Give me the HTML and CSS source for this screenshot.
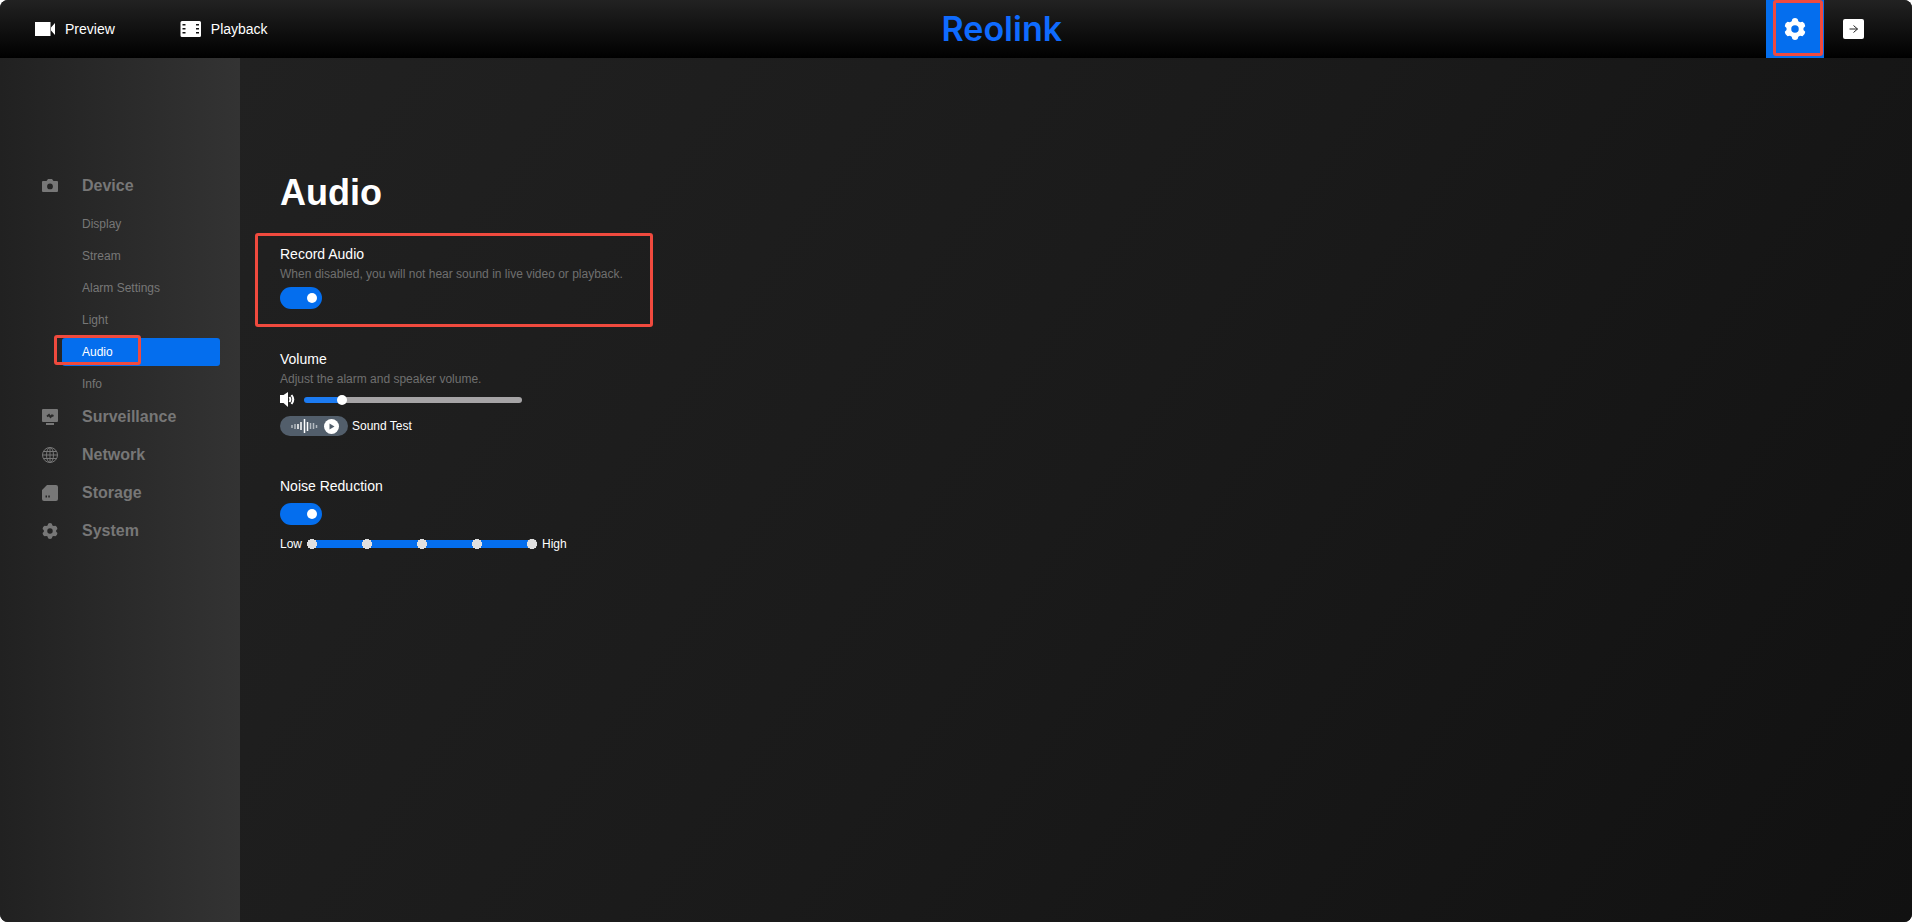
FILE: index.html
```html
<!DOCTYPE html>
<html lang="en">
<head>
<meta charset="utf-8">
<title>Reolink - Audio</title>
<link rel="stylesheet" href="styles.css">
</head>
<body>
<svg class="defs" aria-hidden="true">
  <symbol id="gear" viewBox="0 0 20 20">
    <path fill-rule="evenodd" d="M7.600 0.900 Q10 -0.700 12.400 0.900 L13 3 L14.600 3.900 L16.800 3.400 Q19.200 4.600 19.300 7.400 L17.700 9.100 V10.900 L19.300 12.600 Q19.200 15.400 16.800 16.600 L14.600 16.100 L13 17 L12.400 19.100 Q10 20.700 7.600 19.100 L7 17 L5.400 16.100 L3.200 16.600 Q0.800 15.400 0.700 12.600 L2.300 10.900 V9.100 L0.700 7.400 Q0.800 4.600 3.200 3.400 L5.400 3.900 L7 3 Z M10 6.600 A3.400 3.400 0 1 0 10 13.400 A3.400 3.400 0 1 0 10 6.600 Z"/>
  </symbol>
</svg>
<div class="app">
  <header class="topbar">
    <nav class="tabs" aria-label="Views">
      <a class="tab" href="#preview">
        <svg class="tab-icon" viewBox="0 0 22 16"><path d="M1 1h15.500v14H1zM17 6.500L21 2v12l-4-4.500z"/></svg>
        Preview
      </a>
      <a class="tab" href="#playback">
        <svg class="tab-icon" viewBox="0 0 22 16"><path fill-rule="evenodd" d="M2 0h17.500a1.500 1.500 0 0 1 1.500 1.500v13a1.500 1.500 0 0 1-1.500 1.500H2a1.500 1.500 0 0 1-1.500-1.500v-13A1.500 1.500 0 0 1 2 0zM2.500 3v1.500h3V3zM2.500 7v1.500h3V7zM2.500 11v1.500h3V11zM16 3v1.500h3V3zM16 7v1.500h3V7zM16 11v1.500h3V11z"/></svg>
        Playback
      </a>
    </nav>
    <div class="brand">Reolink</div>
    <button class="bar-button is-active marked" type="button" aria-label="Settings">
      <svg class="gear-icon"><use href="#gear"/></svg>
    </button>
    <button class="bar-button" type="button" aria-label="Log out">
      <svg class="exit-icon" viewBox="0 0 21 20"><rect width="21" height="20" rx="2"/><path class="arrow" d="M6.500 10h8M10.500 6.500l4 3.500-4 3.500"/></svg>
    </button>
  </header>

  <div class="body">
    <nav class="sidebar" aria-label="Settings">
      <a class="group" href="#device">
        <svg class="group-icon" viewBox="0 0 16 16"><path fill-rule="evenodd" d="M1 3h3.500L6 1h4l1.500 2H15a1 1 0 0 1 1 1v9a1 1 0 0 1-1 1H1a1 1 0 0 1-1-1V4a1 1 0 0 1 1-1zM8 5.500a2.900 2.900 0 1 0 0 5.800A2.900 2.900 0 0 0 8 5.500z"/></svg>
        Device
      </a>
      <div class="subnav">
        <a class="item" href="#display">Display</a>
        <a class="item" href="#stream">Stream</a>
        <a class="item" href="#alarm">Alarm Settings</a>
        <a class="item" href="#light">Light</a>
        <a class="item is-current marked" href="#audio" aria-current="page">Audio</a>
        <a class="item" href="#info">Info</a>
      </div>
      <a class="group" href="#surveillance">
        <svg class="group-icon" viewBox="0 0 16 16"><path d="M1 0h14a1 1 0 0 1 1 1v11a1 1 0 0 1-1 1H1a1 1 0 0 1-1-1V1a1 1 0 0 1 1-1zM4 14h8v2H4z"/><path class="cut" d="M5 7.500L7 6l1.500 2L10 6.500l1.500.500"/></svg>
        Surveillance
      </a>
      <a class="group" href="#network">
        <svg class="group-icon line" viewBox="0 0 16 16"><circle cx="8" cy="8" r="7.500"/><ellipse cx="8" cy="8" rx="3.500" ry="7.500"/><path d="M8 .500v15M.500 8h15M2 4.500h12M2 11.500h12"/></svg>
        Network
      </a>
      <a class="group" href="#storage">
        <svg class="group-icon" viewBox="0 0 16 16"><path fill-rule="evenodd" d="M5 0h9a2 2 0 0 1 2 2v12a2 2 0 0 1-2 2H2a2 2 0 0 1-2-2V5zM3.500 10.500v2H5v-2zM6.300 10.500v2h1.500v-2z"/></svg>
        Storage
      </a>
      <a class="group" href="#system">
        <svg class="group-icon"><use href="#gear"/></svg>
        System
      </a>
    </nav>

    <main class="content">
      <h1 class="title">Audio</h1>
      <section class="setting marked">
        <label class="label" for="record">Record Audio</label>
        <p class="hint">When disabled, you will not hear sound in live video or playback.</p>
        <input class="switch" id="record" type="checkbox" role="switch" checked>
      </section>
      <section class="setting">
        <label class="label" for="volume">Volume</label>
        <p class="hint">Adjust the alarm and speaker volume.</p>
        <div class="volume-row">
          <svg class="speaker" viewBox="0 0 16 16"><path d="M0 3h3.500L8 0v15l-4.500-4H0z"/><path class="wave" d="M9.500 5q1.800 2.500 0 5M11.500 3q3.500 4.500 0 9"/></svg>
          <input class="volume" id="volume" type="range" min="0" max="100" value="16">
        </div>
        <div class="test-row">
          <button class="test" id="test" type="button" aria-label="Play sound test">
            <svg class="bars" viewBox="0 0 28 14"><path class="dim" d="M2 6v3M5 5v5M20.500 4v6M23.500 4v6M26.500 6v3"/><path d="M8 5v5M11 3v8M14.500 0v14M17.500 3v9"/></svg>
            <svg class="play" viewBox="0 0 15 15"><circle cx="7.500" cy="7.500" r="7.500"/><path d="M5.500 4.500l5 3-5 3z"/></svg>
          </button>
          <label for="test">Sound Test</label>
        </div>
      </section>
      <section class="setting">
        <label class="label" for="noise">Noise Reduction</label>
        <input class="switch noise-switch" id="noise" type="checkbox" role="switch" checked>
        <div class="level-row">
          <span>Low</span>
          <input class="level" type="range" min="0" max="4" value="4" aria-label="Noise reduction level">
          <span>High</span>
        </div>
      </section>
    </main>
  </div>
</div>
</body>
</html>
```
FILE: styles.css
```css
* {
  box-sizing: border-box;
}

html {
  background: #fff;
}

body {
  margin: 0;
  font: 12px/20px "Liberation Sans", Arial, sans-serif;
  color: #fff;
}

a {
  color: inherit;
  text-decoration: none;
}

button,
input {
  margin: 0;
  padding: 0;
  border: 0;
  font: inherit;
}

svg {
  display: block;
  flex: none;
  fill: currentColor;
}

.defs {
  position: absolute;
  width: 0;
  height: 0;
}

.app {
  display: flex;
  flex-direction: column;
  min-height: 100vh;
  border-radius: 8px;
  overflow: hidden;
  background: #191919;
}

/* Red highlight frames */
.marked {
  position: relative;
}

.marked::after {
  content: "";
  position: absolute;
  border: 3px solid #f04a3e;
  border-radius: 3px;
  pointer-events: none;
}

/* Top bar */
.topbar {
  display: flex;
  align-items: center;
  height: 58px;
  padding-right: 30px;
  background: linear-gradient(#222, #000);
}

.tabs {
  display: flex;
  gap: 65px;
  padding-left: 34px;
  font-size: 14px;
}

.tab {
  display: flex;
  align-items: center;
  gap: 9px;
}

.tab-icon {
  width: 22px;
  height: 16px;
}

.brand {
  flex: 1;
  padding-right: 30px;
  text-align: center;
  font: 600 34px/58px Inter, sans-serif;
  color: #0f6bff;
}

.bar-button {
  display: flex;
  align-items: center;
  justify-content: center;
  width: 58px;
  height: 58px;
  background: none;
  color: #fff;
}

.bar-button.is-active {
  background: #046eee;
}

.bar-button.marked::after {
  inset: 0 1px 2px 7px;
}

.gear-icon {
  width: 22px;
  height: 22px;
}

.exit-icon {
  width: 21px;
  height: 20px;
}

.arrow {
  fill: none;
  stroke: #222;
}

/* Sidebar */
.body {
  display: flex;
  flex: 1;
}

.sidebar {
  flex: none;
  width: 240px;
  padding: 109px 20px 0 42px;
  background: linear-gradient(90deg, #212121, #333);
  color: #777;
}

.group {
  display: flex;
  align-items: center;
  gap: 24px;
  height: 38px;
  font-size: 16px;
  font-weight: bold;
}

.group-icon {
  width: 16px;
  height: 16px;
}

.group-icon.line {
  fill: none;
  stroke: #777;
}

.cut {
  fill: none;
  stroke: #292929;
  stroke-width: 2;
}

.subnav {
  display: grid;
  gap: 4px;
  padding: 5px 0 0 20px;
}

.item {
  padding-left: 20px;
  line-height: 28px;
  border-radius: 3px;
}

.item.is-current {
  background: #046eee;
  color: #fff;
}

.item.marked::after {
  inset: -3px 79px 1px -8px;
}

/* Settings */
.content {
  flex: 1;
  padding: 115px 40px 40px;
  background: linear-gradient(125deg, #212121, #1a1a1a 50%, #111);
}

.title {
  margin: 0 0 31px;
  font-size: 36px;
  line-height: 40px;
}

.setting {
  width: fit-content;
  margin-bottom: 40px;
}

.setting.marked::after {
  inset: -11px -30px -18px -25px;
}

.label {
  display: block;
  font-size: 14px;
}

.hint {
  margin: 0 0 3px;
  color: #6f6f6f;
}

.switch {
  display: block;
  appearance: none;
  width: 42px;
  height: 22px;
  padding: 6px 5px;
  border-radius: 11px;
  background: #555;
}

.switch::before {
  content: "";
  display: block;
  width: 10px;
  height: 10px;
  border-radius: 50%;
  background: #fff;
}

.switch:checked {
  background: #046eee;
}

.switch:checked::before {
  margin-left: auto;
}

.noise-switch {
  margin: 7px 0 9px;
}

.volume-row {
  display: flex;
  align-items: center;
  gap: 8px;
  margin-bottom: 8px;
}

.speaker {
  width: 16px;
  height: 16px;
}

.wave {
  fill: none;
  stroke: #fff;
  stroke-width: 2;
}

.volume,
.level {
  appearance: none;
  height: 10px;
  background: none;
}

.volume {
  width: 218px;
}

.volume::-webkit-slider-runnable-track {
  height: 6px;
  border-radius: 3px;
  background: linear-gradient(90deg, #1c7bf2 17%, #a6a4a6 17%);
}

.volume::-webkit-slider-thumb {
  appearance: none;
  width: 10px;
  height: 10px;
  margin-top: -2px;
  border-radius: 50%;
  background: #fff;
}

.test-row {
  display: flex;
  align-items: center;
  gap: 4px;
}

.test {
  display: flex;
  align-items: center;
  justify-content: space-between;
  width: 68px;
  height: 20px;
  padding: 0 9px 0 10px;
  border-radius: 10px;
  background: #525e6b;
  color: #fff;
}

.bars {
  width: 28px;
  height: 14px;
  fill: none;
  stroke: #fff;
  stroke-width: 1.5;
}

.dim {
  stroke: #b4bac0;
}

.play {
  width: 15px;
  height: 15px;
}

.play path {
  fill: #525e6b;
}

.level-row {
  display: flex;
  align-items: center;
  gap: 5px;
}

.level {
  width: 230px;
  background:
    radial-gradient(circle at 5px 5px, #e0e0e0 5px, transparent 5px) 0 0 / 55px 10px,
    linear-gradient(#046eee, #046eee) center / calc(100% - 10px) 8px no-repeat;
}

.level::-webkit-slider-thumb {
  appearance: none;
  width: 10px;
  height: 10px;
  border-radius: 50%;
  background: #e0e0e0;
}
```
